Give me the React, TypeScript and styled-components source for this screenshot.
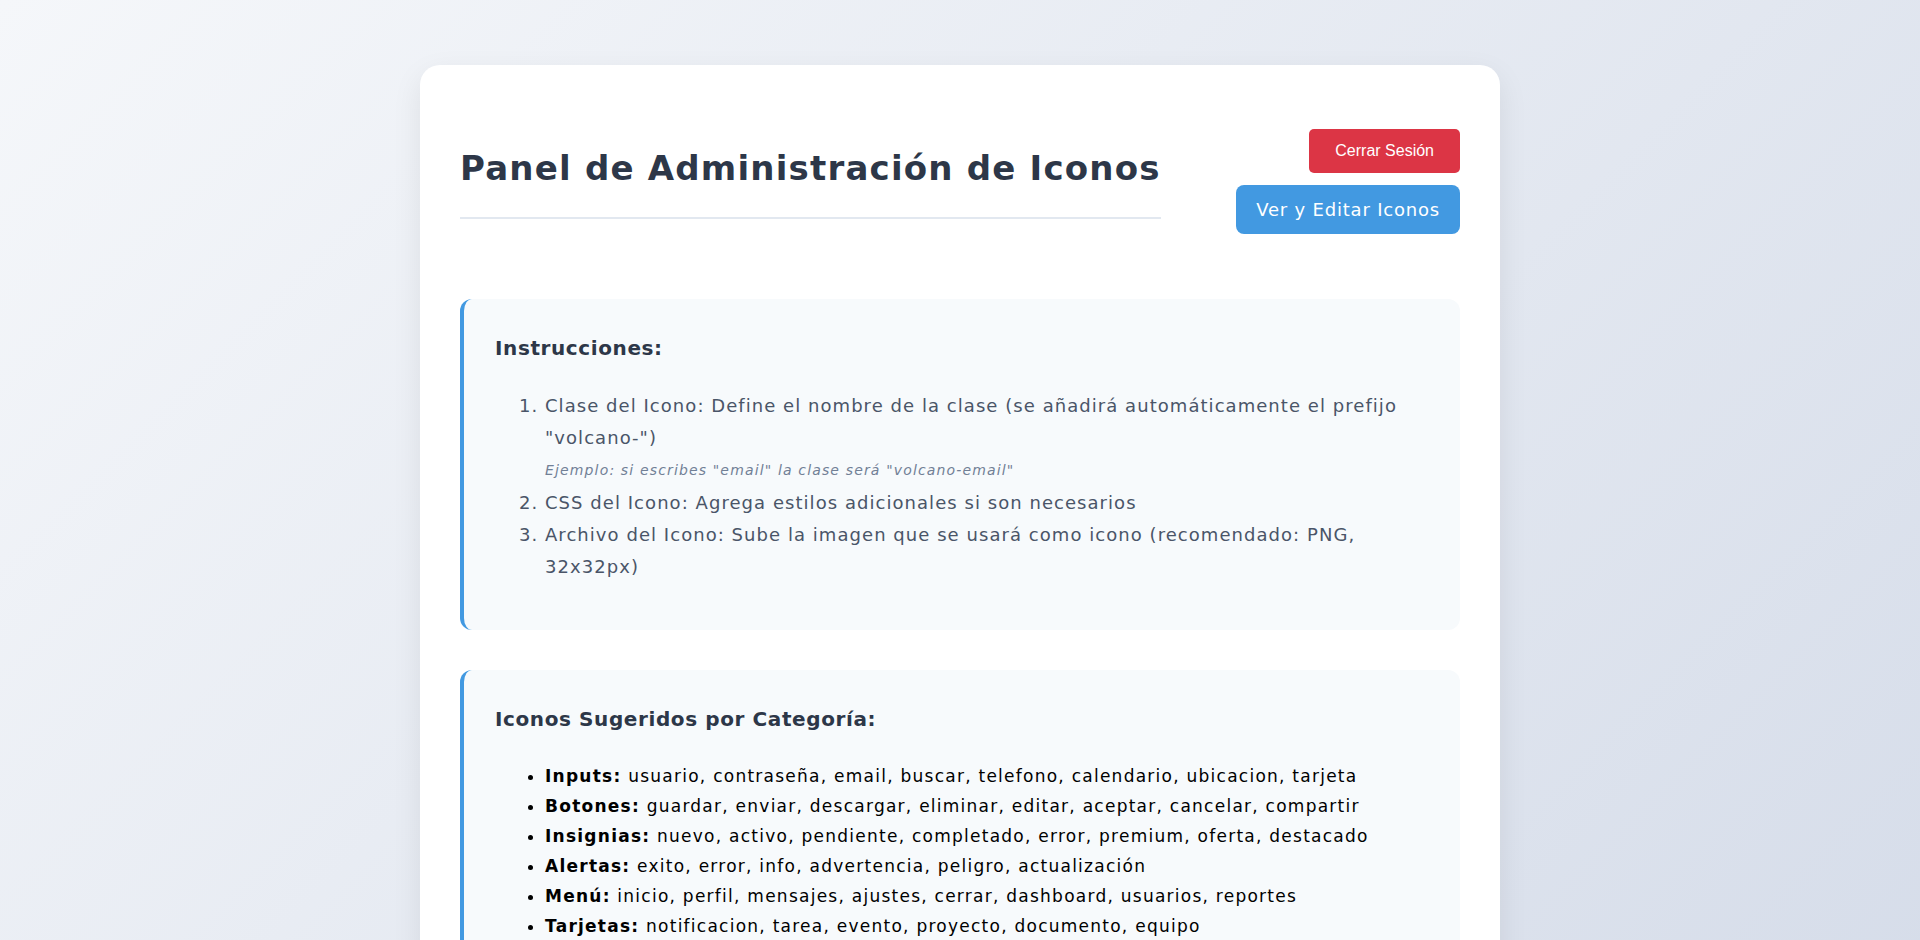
import React from "react";
import styled, { createGlobalStyle } from "styled-components";

const GlobalStyle = createGlobalStyle`
  html, body {
    margin: 0;
    padding: 0;
  }
  body {
    font-family: 'DejaVu Sans', 'Noto Sans', sans-serif;
    background: linear-gradient(135deg, #f5f7fa 0%, #d5dce9 100%);
    min-height: 100vh;
    overflow: hidden;
  }
`;

const instructions = [
  {
    text: 'Clase del Icono: Define el nombre de la clase (se añadirá automáticamente el prefijo "volcano-")',
    example: 'Ejemplo: si escribes "email" la clase será "volcano-email"',
  },
  { text: "CSS del Icono: Agrega estilos adicionales si son necesarios" },
  { text: "Archivo del Icono: Sube la imagen que se usará como icono (recomendado: PNG, 32x32px)" },
];

const categories = [
  ["Inputs:", "usuario, contraseña, email, buscar, telefono, calendario, ubicacion, tarjeta"],
  ["Botones:", "guardar, enviar, descargar, eliminar, editar, aceptar, cancelar, compartir"],
  ["Insignias:", "nuevo, activo, pendiente, completado, error, premium, oferta, destacado"],
  ["Alertas:", "exito, error, info, advertencia, peligro, actualización"],
  ["Menú:", "inicio, perfil, mensajes, ajustes, cerrar, dashboard, usuarios, reportes"],
  ["Tarjetas:", "notificacion, tarea, evento, proyecto, documento, equipo"],
];

const App = () => {
  return (
    <Page>
      <GlobalStyle />
      <Card>
        <Header>
          <Title>Panel de Administración de Iconos</Title>
          <HeaderActions>
            <LogoutButton>Cerrar Sesión</LogoutButton>
            <PrimaryButton>Ver y Editar Iconos</PrimaryButton>
          </HeaderActions>
        </Header>

        <InfoBox>
          <BoxTitle>Instrucciones:</BoxTitle>
          <StepList>
            {instructions.map((item) => (
              <li key={item.text}>
                {item.text}
                {item.example && <Example>{item.example}</Example>}
              </li>
            ))}
          </StepList>
        </InfoBox>

        <InfoBox>
          <BoxTitle>Iconos Sugeridos por Categoría:</BoxTitle>
          <CategoryList>
            {categories.map(([label, names]) => (
              <li key={label}>
                <strong>{label}</strong> {names}
              </li>
            ))}
          </CategoryList>
        </InfoBox>
      </Card>
    </Page>
  );
};

export default App;

const Page = styled.div`
  display: flex;
  justify-content: center;
  padding-top: 65px;
`;

const Card = styled.div`
  width: 1000px;
  padding: 40px;
  background: #fff;
  border-radius: 20px;
  box-shadow: 0 10px 30px rgba(0, 0, 0, 0.08);
`;

const Header = styled.div`
  display: flex;
  justify-content: space-between;
  align-items: flex-start;
  margin-bottom: 65px;
`;

const Title = styled.h1`
  margin: 42px 0 0;
  padding-bottom: 28px;
  border-bottom: 2px solid #e2e8f0;
  font-size: 34px;
  line-height: 42px;
  font-weight: 600;
  color: #2d3748;
  letter-spacing: 1.2px;
`;

const HeaderActions = styled.div`
  display: flex;
  flex-direction: column;
  align-items: flex-end;
  gap: 12px;
  margin-top: 24px;
`;

const LogoutButton = styled.button`
  font-family: 'Liberation Sans', Arial, sans-serif;
  font-size: 16px;
  line-height: 18px;
  padding: 13px 26px;
  background: #dc3545;
  color: #fff;
  border: none;
  border-radius: 5px;
  cursor: pointer;
`;

const PrimaryButton = styled.button`
  font-family: 'DejaVu Sans', sans-serif;
  font-size: 18px;
  font-weight: 500;
  line-height: 27px;
  letter-spacing: 0.8px;
  padding: 11px 20px;
  background: #4299e1;
  color: #fff;
  border: none;
  border-radius: 8px;
  cursor: pointer;
`;

const InfoBox = styled.div`
  background: #f7fafc;
  border-left: 4px solid #4299e1;
  border-radius: 12px;
  padding: 37px 30px 30px 31px;
  margin-bottom: 40px;
`;

const BoxTitle = styled.h3`
  margin: 0 0 30px;
  font-size: 20px;
  line-height: 24px;
  font-weight: 600;
  letter-spacing: 0.6px;
  color: #2d3748;
`;

const StepList = styled.ol`
  margin: 0 0 17px;
  padding-left: 50px;
  font-size: 18px;
  line-height: 32px;
  letter-spacing: 1.05px;
  color: #4a5568;
`;

const Example = styled.span`
  display: block;
  margin: 4px 0;
  font-size: 14px;
  line-height: 25px;
  letter-spacing: 1.15px;
  font-style: italic;
  color: #718096;
`;

const CategoryList = styled.ul`
  margin: 0 0 17px;
  padding-left: 50px;
  font-size: 17px;
  line-height: 30px;
  letter-spacing: 1.25px;
  color: #000;

  strong {
    font-weight: 600;
  }
`;
